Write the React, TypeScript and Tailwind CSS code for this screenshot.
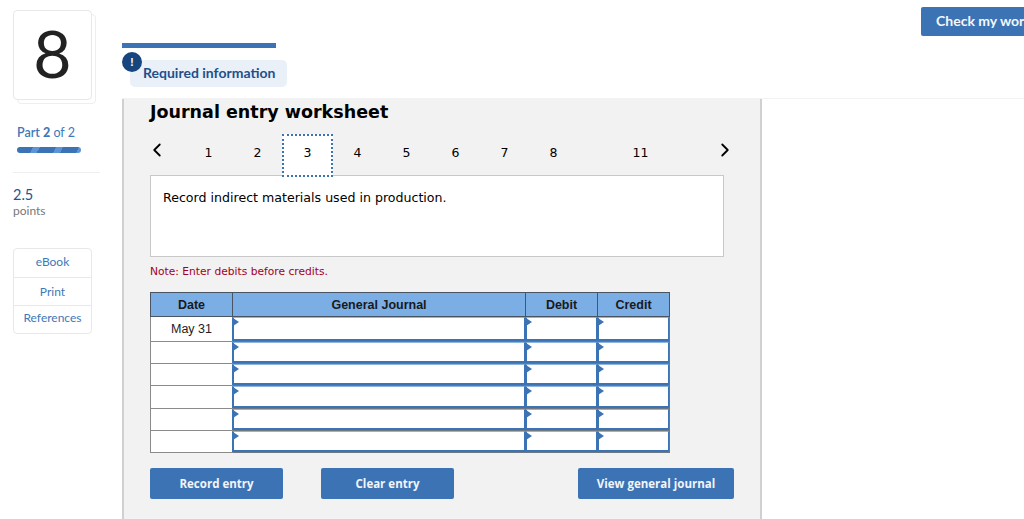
import React from "react";
import { ChevronLeft, ChevronRight } from "lucide-react";

const tabs = ["1", "2", "3", "4", "5", "6", "7", "8"];
const rows = ["May 31", "", "", "", "", ""];

function EntryCell() {
  return (
    <td className="relative p-0 border border-[#6f7780] bg-white">
      <div className="absolute inset-y-0 -left-px right-0 border-b-2 border-l-2 border-r border-t border-[#3b73b5] border-t-[#8fb4dd] bg-white" />
      <span className="absolute left-0 top-[1px] h-0 w-0 border-y-[4px] border-l-[6px] border-y-transparent border-l-[#3b73b5]" />
    </td>
  );
}

function Button({ label, className }: { label: string; className: string }) {
  return (
    <button className={`h-[31px] rounded-[2px] bg-[#3b73b5] font-['Open_Sans',sans-serif] text-[11.5px] font-bold text-[#f2f5fa] ${className}`}>
      {label}
    </button>
  );
}

export default function App() {
  return (
    <div className="flex h-[519px] w-[1024px] overflow-hidden bg-white font-['Lato',sans-serif]">
      <aside className="w-[122px] shrink-0 pl-[13px] pt-[10px]">
        <div className="relative h-[90px] w-[79px]">
          <div className="absolute left-[4px] top-[4px] h-[90px] w-[79px] rounded-[4px] border border-[#eeeeee] bg-white" />
          <div className="absolute inset-0 flex items-center justify-center rounded-[4px] border border-[#e8e8e8] bg-white pb-[4px] text-[66px] leading-none text-[#222222]">
            8
          </div>
        </div>
        <div className="mt-[24px] pl-[4px] text-[12.5px] font-semibold leading-[18px] text-[#3f78b8]">
          Part <b>2</b> <span className="font-normal">of 2</span>
        </div>
        <div className="ml-[4px] mt-[5px] h-[6px] w-[64px] rounded-full bg-[repeating-linear-gradient(120deg,#3b73b5_0_14px,#5b95d6_14px_20px)]" />
        <div className="mt-[19px] h-px w-[87px] bg-[#eeeeee]" />
        <div className="mt-[14px] text-[14.5px] leading-[16px] text-[#24558f]">2.5</div>
        <div className="text-[12px] leading-[16px] text-[#777777]">points</div>
        <div className="mt-[29px] w-[79px] rounded-[4px] border border-[#e8e8e8] text-center text-[12px] text-[#3f78b8]">
          <div className="h-[29px] border-b border-[#e8e8e8] leading-[26px]">eBook</div>
          <div className="h-[28px] border-b border-[#e8e8e8] leading-[28px]">Print</div>
          <div className="h-[27px] leading-[24px]">References</div>
        </div>
      </aside>

      <main className="min-w-0 flex-1">
        <header className="flex h-[99px] items-start border-b border-[#f2f2f2]">
          <div className="relative mt-[43px] w-[154px]">
            <div className="h-[5px] bg-[#3b73b5]" />
            <div className="ml-[8px] mt-[12px] flex h-[27px] w-[157px] items-center whitespace-nowrap rounded-[5px] bg-[#eaf0f8] pb-[2px] pl-[13px] text-[14px] font-bold text-[#1f4f8a]">
              Required information
            </div>
            <div className="absolute left-0 top-[9px] flex h-[20px] w-[20px] items-center justify-center rounded-full bg-[#17467f] text-[12px] font-bold text-white">
              !
            </div>
          </div>
          <button className="ml-auto mr-[-17px] mt-[7px] h-[29px] w-[120px] shrink-0 whitespace-nowrap rounded-[2px] bg-[#3b73b5] pb-[3px] pl-[15px] text-left text-[14px] font-bold text-[#f4f7fb]">
            Check my work
          </button>
        </header>

        <section className="h-[420px] w-[640px] border-x-2 border-[#d0d0d0] bg-[#f2f2f2] pl-[26px] font-['DejaVu_Sans',sans-serif]">
          <h1 className="pt-[1px] text-[17.5px] font-bold leading-[24px] text-black">Journal entry worksheet</h1>

          <nav className="mt-[10px] flex h-[41px] items-start text-[12.5px] text-black">
            <ChevronLeft className="ml-[-4px] mt-[5px] h-[22px] w-[22px]" strokeWidth={2} />
            <div className="ml-[16px] flex">
              {tabs.map((t) => (
                <div
                  key={t}
                  className={
                    t === "3"
                      ? "relative z-10 flex h-[43px] w-[51px] items-center justify-center border-2 border-dotted border-[#3b73b5] bg-white pb-[5px]"
                      : "flex h-[43px] w-[49px] items-center justify-center pb-[5px]"
                  }
                >
                  {t}
                </div>
              ))}
            </div>
            <div className="ml-[38px] flex h-[43px] w-[49px] items-center justify-center pb-[5px]">11</div>
            <ChevronRight className="ml-[49px] mt-[5px] h-[22px] w-[22px]" strokeWidth={2} />
          </nav>

          <div className="h-[82px] w-[574px] border border-[#c8c8c8] bg-white px-[12px] pt-[14px] text-[12.6px] leading-[16px] text-black">
            Record indirect materials used in production.
          </div>

          <p className="mt-[8px] text-[10.7px] leading-[14px] text-[#a3001e]">Note: Enter debits before credits.</p>

          <table className="mt-[13px] h-[161px] w-[519px] table-fixed border-collapse font-['Liberation_Sans',sans-serif] text-[12.5px]">
            <colgroup>
              <col className="w-[82px]" />
              <col className="w-[293px]" />
              <col className="w-[72px]" />
              <col className="w-[72px]" />
            </colgroup>
            <thead>
              <tr className="h-[24px] bg-[#7baee5] font-bold text-[#1a1a1a]">
                <th className="border border-[#4a5563] pt-px">Date</th>
                <th className="border border-[#4a5563] pt-px">General Journal</th>
                <th className="border border-[#4a5563] pt-px">Debit</th>
                <th className="border border-[#4a5563] pt-px">Credit</th>
              </tr>
            </thead>
            <tbody>
              {rows.map((d, i) => (
                <tr key={i} className={i === 0 ? "h-[25px]" : "h-[22px]"}>
                  <td className="border border-[#8a8a8a] bg-white p-0 text-center text-[#222222]">{d}</td>
                  <EntryCell />
                  <EntryCell />
                  <EntryCell />
                </tr>
              ))}
            </tbody>
          </table>

          <div className="mt-[15px] flex">
            <Button label="Record entry" className="w-[133px]" />
            <Button label="Clear entry" className="ml-[38px] w-[133px]" />
            <Button label="View general journal" className="ml-[124px] w-[156px]" />
          </div>
        </section>
      </main>
    </div>
  );
}
